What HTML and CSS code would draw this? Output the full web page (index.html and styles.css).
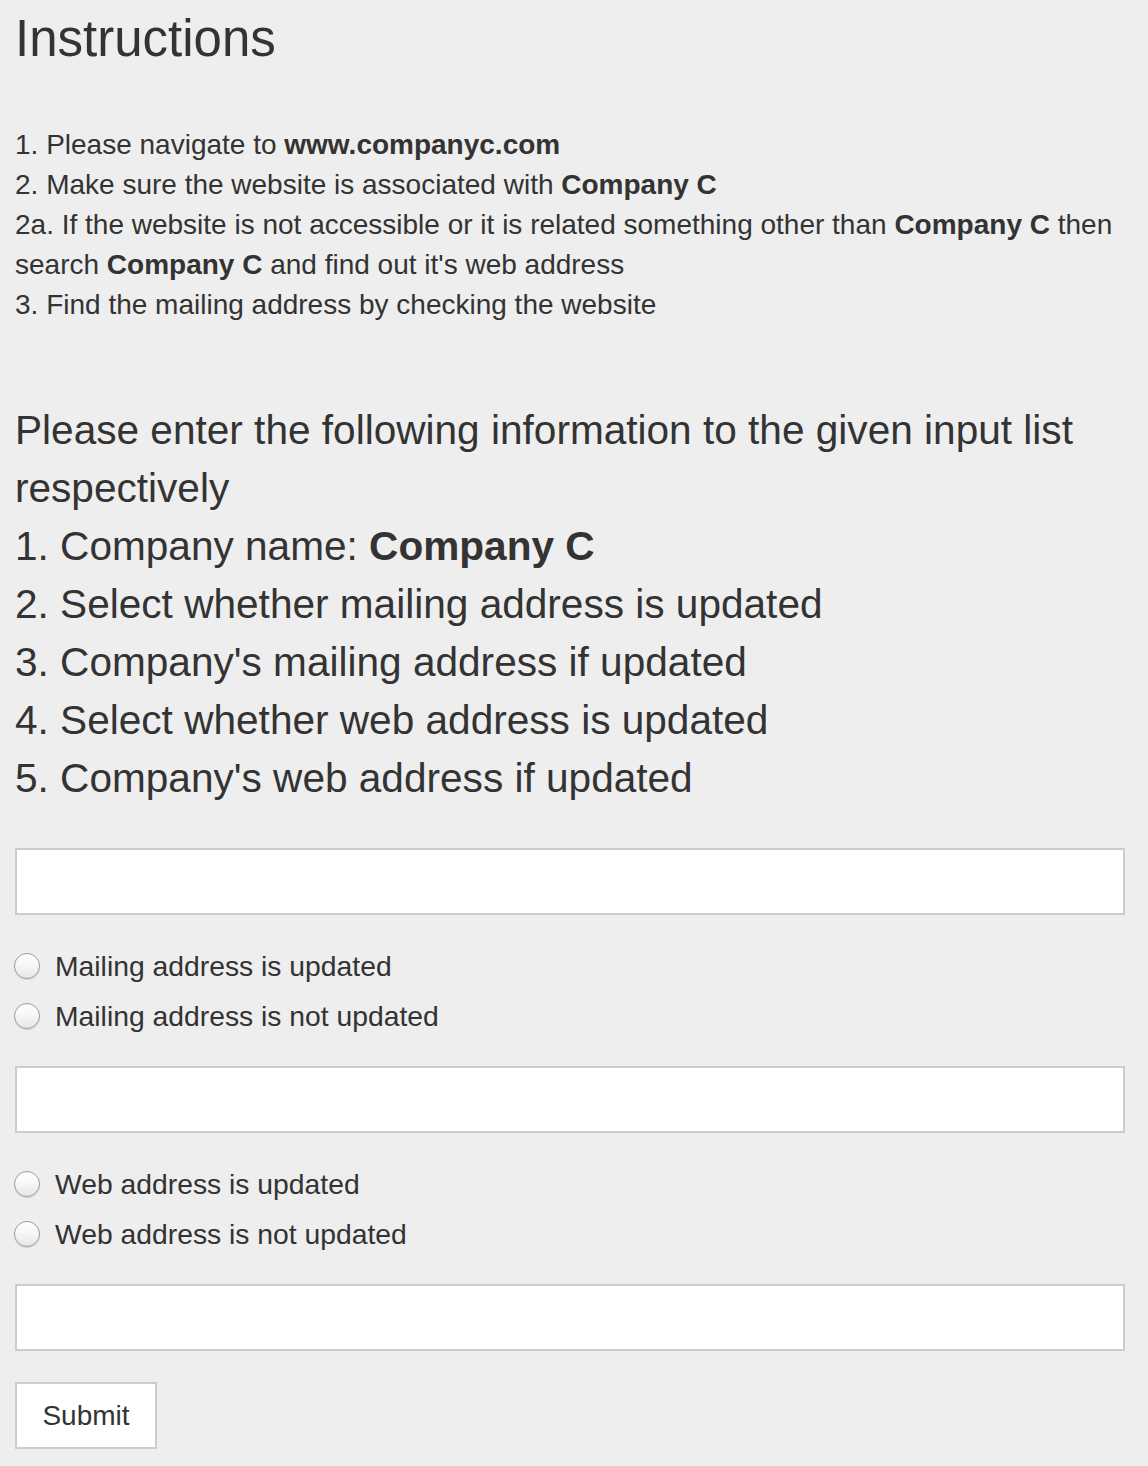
FILE: index.html
```html
<!DOCTYPE html>
<html lang="en">
<head>
<meta charset="utf-8">
<title>Instructions</title>
<link rel="stylesheet" href="styles.css">
</head>
<body>
<div class="page">
  <h1 class="title">Instructions</h1>
  <div class="steps">
    <div>1. Please navigate to <b>www.companyc.com</b></div>
    <div>2. Make sure the website is associated with <b>Company C</b></div>
    <div>2a. If the website is not accessible or it is related something other than <b>Company C</b> then search <b>Company C</b> and find out it's web address</div>
    <div>3. Find the mailing address by checking the website</div>
  </div>
  <div class="task">
    <div>Please enter the following information to the given input list respectively</div>
    <div>1. Company name: <b>Company C</b></div>
    <div>2. Select whether mailing address is updated</div>
    <div>3. Company's mailing address if updated</div>
    <div>4. Select whether web address is updated</div>
    <div>5. Company's web address if updated</div>
  </div>
  <form class="form">
    <input class="field" type="text">
    <div class="choices">
      <label class="choice"><input class="radio" type="radio" name="mail"><span>Mailing address is updated</span></label>
      <label class="choice"><input class="radio" type="radio" name="mail"><span>Mailing address is not updated</span></label>
    </div>
    <input class="field" type="text">
    <div class="choices">
      <label class="choice"><input class="radio" type="radio" name="web"><span>Web address is updated</span></label>
      <label class="choice"><input class="radio" type="radio" name="web"><span>Web address is not updated</span></label>
    </div>
    <input class="field" type="text">
    <button class="submit" type="button">Submit</button>
  </form>
</div>
</body>
</html>
```
FILE: styles.css
```css
html, body {
  margin: 0;
  padding: 0;
  background: #eeeeee;
}
body {
  font-family: "Liberation Sans", Arial, Helvetica, sans-serif;
  color: #333333;
}
.page {
  width: 1110px;
  padding: 9px 23px 0 15px;
}
.title {
  margin: 0;
  font-size: 51px;
  line-height: 60px;
  font-weight: 500;
  color: #333;
}
.steps {
  margin-top: 56px;
  font-size: 28px;
  line-height: 40px;
}
.steps b, .task b {
  font-weight: 700;
}
.task {
  margin-top: 76px;
  font-size: 40.6px;
  line-height: 58px;
  font-weight: 400;
}
.form {
  display: flex;
  flex-direction: column;
  align-items: flex-start;
  margin-top: 41px;
}
.field {
  box-sizing: border-box;
  width: 1110px;
  height: 67px;
  margin: 0;
  border: 2px solid #cccccc;
  background: #ffffff;
  outline: none;
  padding: 0 12px;
  font-family: inherit;
  font-size: 24px;
}
.choices {
  display: flex;
  flex-direction: column;
  margin: 26px 0 25px;
}
.choice {
  display: flex;
  align-items: center;
  height: 50px;
  font-size: 28.3px;
  line-height: 50px;
  margin-left: -1px;
}
.radio {
  appearance: none;
  -webkit-appearance: none;
  box-sizing: border-box;
  width: 26px;
  height: 26px;
  margin: 0 15px 0 0;
  border-radius: 50%;
  border: 1px solid #9c9c9c;
  background: linear-gradient(#ffffff 0%, #f7f7f7 45%, #e6e6e6 100%);
  box-shadow: 0 1px 1px rgba(0,0,0,0.12), inset 0 1px 1px rgba(255,255,255,0.9);
}
.submit {
  box-sizing: border-box;
  margin-top: 31px;
  width: 142px;
  height: 67px;
  border: 2px solid #cccccc;
  background: #ffffff;
  color: #333;
  font-family: inherit;
  font-size: 28px;
  padding: 0;
}
```
